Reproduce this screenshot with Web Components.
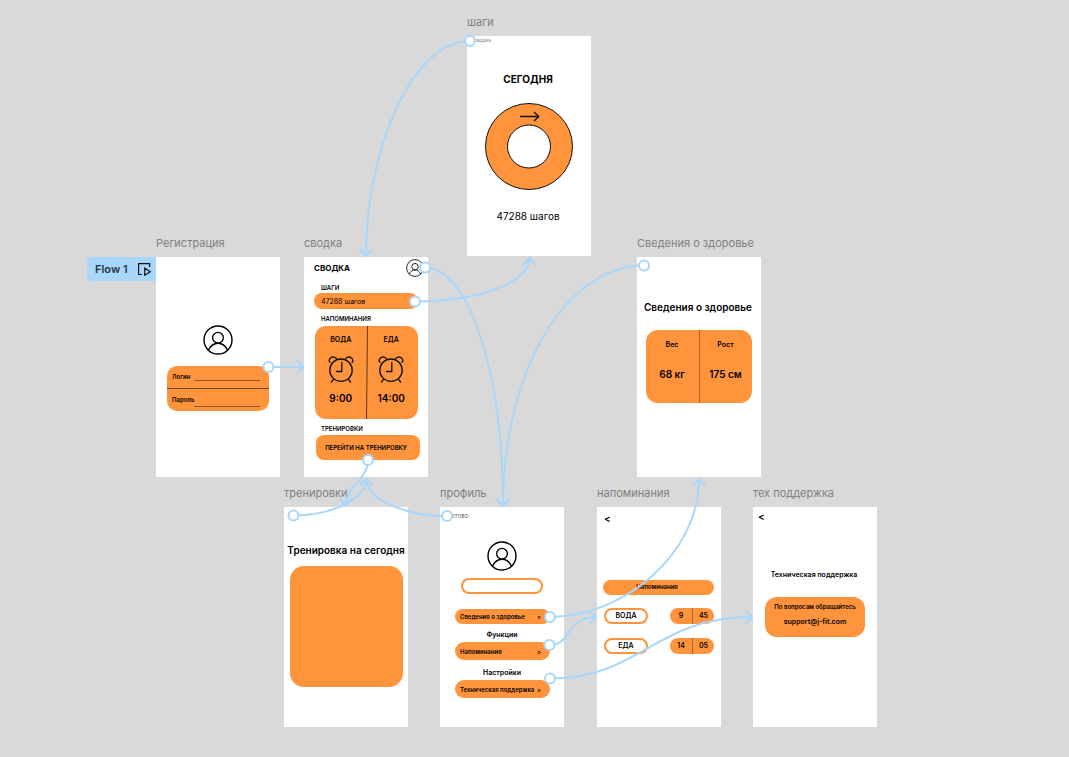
<!DOCTYPE html>
<html lang="ru">
<head>
<meta charset="utf-8">
<title>Прототип фитнес-приложения</title>
<style>
  html, body { margin: 0; min-height: 100%; background: #d9d9d9; }
  body { font-family: Inter, "Liberation Sans", sans-serif; color: #000; }
</style>
</head>
<body>
<flow-canvas>
  <flow-start style="left: 87px; top: 257px">Flow 1</flow-start>
  <design-frame label="шаги" style="left: 467px; top: 16px"><steps-screen></steps-screen></design-frame>
  <design-frame label="Регистрация" style="left: 156px; top: 237px"><signup-screen></signup-screen></design-frame>
  <design-frame label="сводка" style="left: 304px; top: 237px"><summary-screen></summary-screen></design-frame>
  <design-frame label="Сведения о здоровье" style="left: 637px; top: 237px"><health-screen></health-screen></design-frame>
  <design-frame label="тренировки" style="left: 284px; top: 487px"><training-screen></training-screen></design-frame>
  <design-frame label="профиль" style="left: 440px; top: 487px"><profile-screen></profile-screen></design-frame>
  <design-frame label="напоминания" style="left: 597px; top: 487px"><reminders-screen></reminders-screen></design-frame>
  <design-frame label="тех поддержка" style="left: 753px; top: 487px"><support-screen></support-screen></design-frame>
  <flow-wires slot="wires"></flow-wires>
</flow-canvas>

<script>
const shared = `
  *, *::before, *::after { box-sizing: border-box; }
  h2, h3, p { margin: 0; }
  a { color: inherit; text-decoration: none; }
  button { font: inherit; color: inherit; border: 0; padding: 0; margin: 0; background: none; }
  h2 { font-size: 10px; line-height: 12px; font-weight: 600; text-align: center; white-space: nowrap; }
  h3 { font-size: 6px; line-height: 8px; font-weight: 600; }
  .orange { background: #ff943c; }
  .tiny { font-size: 4px; line-height: 10px; color: #555; padding-left: 7px; }
`;
function define(name, css, html, setup) {
  const template = document.createElement('template');
  template.innerHTML = `<style>${shared}${css}</style>${html}`;
  customElements.define(name, class extends HTMLElement {
    constructor() {
      super();
      this.attachShadow({ mode: 'open' }).append(template.content.cloneNode(true));
    }
    connectedCallback() { if (setup) setup(this, this.shadowRoot); }
  });
}
const screenHost = ':host { display: flex; flex-direction: column; }';

define('flow-canvas', `
  :host { display: block; position: relative; min-height: 100vh; overflow: hidden; }
`, `<slot></slot><slot name="wires"></slot>`);

define('design-frame', `
  :host { display: block; position: absolute; width: 124px; }
  .label { font-size: 11px; line-height: 12px; margin-bottom: 8px; color: #808080; white-space: nowrap; }
  .screen { background: #fff; min-height: 220px; }
`, `<div class="label"></div><div class="screen"><slot></slot></div>`,
(el, root) => { root.querySelector('.label').textContent = el.getAttribute('label'); });

define('flow-start', `
  :host { display: block; position: absolute; }
  button { display: flex; align-items: center; justify-content: space-between; width: 69px; height: 24px; padding: 0 4px 0 8px;
    background: #a8d7fb; border-radius: 4px 0 0 4px; font-size: 11px; font-weight: 600; color: #253643; white-space: nowrap; }
  svg { display: block; }
`, `<button type="button"><slot></slot>
  <svg width="15" height="14" viewBox="0 0 15 14" fill="none" stroke="#111" stroke-width="1.2">
    <path d="M5 12.500H1.600V1.600h11v3.400M7.700 6.200v7l5.600-3.500z"/></svg></button>`);

define('user-avatar', `
  :host { display: block; width: 30px; height: 30px; }
  svg { display: block; width: 100%; height: 100%; }
`, `<svg viewBox="0 0 30 30" fill="none" stroke="#000" stroke-width="1.4">
  <circle cx="15" cy="15" r="14"/><circle cx="15" cy="12.800" r="5.400"/>
  <path d="M5.500 25.200C7.500 20.800 11 18.200 15 18.200s7.500 2.600 9.500 7"/></svg>`);

define('alarm-clock', `
  :host { display: block; width: 26px; height: 28px; }
  svg { display: block; }
`, `<svg width="26" height="28" viewBox="0 0 26 28" fill="none" stroke="#111" stroke-width="1.3" stroke-linecap="round">
  <circle cx="13" cy="14.200" r="11.200"/>
  <path d="M13.800 6.500v9H8.500M5.500 23.300l-2 2.700M20.500 23.300l2 2.700"/>
  <path d="M2 6.400C-.3 4.200 2.800.4 6 1.100c1.200.2 2 .7 2.300 1.500M24 6.400C26.300 4.200 23.200.4 20 1.100c-1.200.2-2 .7-2.300 1.500"/>
</svg>`);

define('steps-screen', `${screenHost}
  :host { text-align: center; }
  .tiny { text-align: left; }
  h2 { font-weight: 700; margin-top: 27px; margin-right: 2px; }
  svg { display: block; margin: 18px auto 20px; }
  p { font-size: 10px; line-height: 12px; margin-right: 2px; }
`, `<a href="#summary" class="tiny">СВОДКА</a>
  <h2>СЕГОДНЯ</h2>
  <svg width="88" height="87" viewBox="0 0 88 87" fill="none" stroke="#111">
    <ellipse cx="44" cy="43.500" rx="43.500" ry="43" fill="#ff943c"/>
    <circle cx="44" cy="43.500" r="21.500" fill="#fff"/>
    <path d="M35 13.500h18.500M49 9l4.800 4.500L49 18" stroke-width="1.300"/>
  </svg>
  <p>47288 шагов</p>`);

define('signup-screen', `${screenHost}
  user-avatar { margin: 68px auto 11px; }
  form { margin: 0 11px; border-radius: 10px; font-size: 6px; font-weight: 600; overflow: hidden; }
  .row { display: flex; height: 22px; padding: 0 9px 0 5px; }
  .row + .row { border-top: 1px solid #6b421f; height: 23px; }
  label { flex: 0 0 22px; line-height: 22px; white-space: nowrap; }
  input { flex: 1; min-width: 0; height: 15px; font: inherit; padding: 0; border: 0; border-bottom: 1px solid #8f5628; background: none; outline: 0; }
  .row + .row input { height: 18px; }
`, `<user-avatar></user-avatar>
  <form class="orange">
    <div class="row"><label for="login">Логин</label><input id="login" type="text"></div>
    <div class="row"><label for="password">Пароль</label><input id="password" type="password"></div>
  </form>`);

define('summary-screen', `${screenHost}
  header { display: flex; align-items: center; justify-content: space-between; height: 21px; padding: 0 4px 0 10px; }
  h2 { font-size: 8px; font-weight: 700; }
  user-avatar { width: 18px; height: 18px; }
  h3 { margin-left: 17px; }
  .steps { display: flex; justify-content: space-between; align-items: center; height: 16px; margin: 1px 10px 6px; padding: 0 8px 0 7px; border-radius: 8px; font-size: 7px; }
  .steps-title { margin-top: 6px; }
  .cards { position: relative; display: grid; grid-template-columns: 1fr 1fr; height: 93px; margin: 3px 10px 6px 11px; border-radius: 11px; }
  .split { position: absolute; inset: 0; width: 100%; height: 100%; }
  .card { display: flex; flex-direction: column; align-items: center; padding-top: 10px; }
  .card:last-child { padding-right: 2px; }
  .name { font-size: 7px; line-height: 8px; font-weight: 600; }
  alarm-clock { margin: 12px 0 8px; }
  .time { font-size: 10px; line-height: 12px; font-weight: 600; }
  .go { height: 25px; margin: 2px 8px 0 12px; padding-right: 4px; border-radius: 8px; font-size: 6px; font-weight: 600; white-space: nowrap; }
`, `<header><h2>СВОДКА</h2><user-avatar></user-avatar></header>
  <h3 class="steps-title">ШАГИ</h3>
  <a href="#steps" class="steps orange"><span>47288 шагов</span></a>
  <h3>НАПОМИНАНИЯ</h3>
  <div class="cards orange">
    <svg class="split" viewBox="0 0 103 93" preserveAspectRatio="none"><path d="M52.500 0L51.500 93" stroke="#5a3a1e" stroke-width="1"/></svg>
    <div class="card"><span class="name">ВОДА</span><alarm-clock></alarm-clock><span class="time">9:00</span></div>
    <div class="card"><span class="name">ЕДА</span><alarm-clock></alarm-clock><span class="time">14:00</span></div>
  </div>
  <h3>ТРЕНИРОВКИ</h3>
  <button type="button" class="go orange">ПЕРЕЙТИ НА ТРЕНИРОВКУ</button>`);

define('health-screen', `${screenHost}
  .tiny { padding-left: 12px; line-height: 20px; height: 20px; }
  h2 { margin: 24px 2px 17px 0; }
  .box { display: grid; grid-template-columns: 1fr 1fr; height: 73px; margin: 0 9px; border-radius: 12px; text-align: center; }
  .cell { padding: 11px 1px 0 0; }
  .cell + .cell { border-left: 1px solid #a5642d; }
  .name { font-size: 7px; line-height: 8px; font-weight: 600; margin-bottom: 19px; }
  .value { font-size: 10px; line-height: 12px; font-weight: 600; }
`, `<a href="#profile" class="tiny">,</a>
  <h2>Сведения о здоровье</h2>
  <div class="box orange">
    <div class="cell"><p class="name">Вес</p><p class="value">68 кг</p></div>
    <div class="cell"><p class="name">Рост</p><p class="value">175 см</p></div>
  </div>`);

define('training-screen', `${screenHost}
  h2 { margin: 37px 0 10px; }
  .box { height: 121px; margin: 0 5px 0 6px; border-radius: 14px; }
`, `<h2>Тренировка на сегодня</h2><div class="box orange"></div>`);

define('profile-screen', `${screenHost}
  .tiny { font-size: 5px; line-height: 18px; padding-left: 8px; }
  user-avatar { margin: 16px auto 7px; }
  input { display: block; width: auto; height: 16px; margin: 0 21px 15px; padding: 0 8px; border: 2px solid #ff943c; border-radius: 8px; background: #fff; font: inherit; font-size: 7px; outline: 0; }
  .item { display: flex; align-items: center; justify-content: space-between; height: 15px; margin: 0 14px 0 15px; padding: 0 9px 0 5px; border-radius: 9px; font-size: 6px; font-weight: 600; white-space: nowrap; }
  h3 { font-size: 7px; line-height: 9px; text-align: center; margin: 6px 0 3px; }
  .tall { height: 18px; }
  .tall + h3 { margin-top: 8px; }
`, `<a href="#summary" class="tiny">ГОТОВО</a>
  <user-avatar></user-avatar>
  <input type="text" aria-label="Имя">
  <a href="#health" class="item orange"><span>Сведения о здоровье</span><span>&gt;</span></a>
  <h3>Функции</h3>
  <a href="#reminders" class="item tall orange"><span>Напоминания</span><span>&gt;</span></a>
  <h3>Настройки</h3>
  <a href="#support" class="item tall orange"><span>Техническая поддержка</span><span>&gt;</span></a>`);

define('reminders-screen', `${screenHost}
  .back { font-size: 10px; line-height: 12px; font-weight: 600; padding-left: 7px; margin: 5px 0 56px; }
  .title { height: 15px; line-height: 14px; margin: 0 7px 13px 6px; padding-right: 3px; border-radius: 8px; text-align: center; }
  .row { display: flex; justify-content: space-between; height: 16px; margin: 0 7px 14px; font-size: 7px; line-height: 16px; font-weight: 600; text-align: center; }
  .name { width: 44px; line-height: 12px; border: 2px solid #ff943c; border-radius: 8px; }
  .time { display: grid; grid-template-columns: 1fr 1fr; width: 44px; border-radius: 8px; }
  .time span + span { border-left: 1px solid #a5642d; }
`, `<a href="#profile" class="back">&lt;</a>
  <h3 class="title orange">Напоминания</h3>
  <div class="row"><span class="name">ВОДА</span><div class="time orange"><span>9</span><span>45</span></div></div>
  <div class="row"><span class="name">ЕДА</span><div class="time orange"><span>14</span><span>05</span></div></div>`);

define('support-screen', `${screenHost}
  .back { font-size: 10px; line-height: 12px; font-weight: 600; padding-left: 5px; margin-top: 3px; }
  h2 { font-size: 7px; margin: 47px 2px 16px 0; }
  .box { display: flex; flex-direction: column; align-items: center; height: 40px; margin: 0 12px; padding-top: 6px; border-radius: 12px; font-size: 6px; line-height: 8px; font-weight: 600; white-space: nowrap; }
  .mail { font-size: 7px; margin-top: 7px; }
`, `<a href="#profile" class="back">&lt;</a>
  <h2>Техническая поддержка</h2>
  <div class="box orange"><p>По вопросам обращайтесь</p><a class="mail" href="mailto:support@j-fit.com">support@j-fit.com</a></div>`);

define('flow-wires', `
  :host { display: block; position: absolute; inset: 0; pointer-events: none; }
  svg { display: block; width: 100%; height: 100%; overflow: visible; }
`, `<svg fill="none" stroke="#a8d7fb" stroke-width="2" stroke-linecap="round" stroke-linejoin="round">
  <path d="M470 41C412 41 366 150 366 256M360 249.500l6 6.500 6-6.500"/>
  <path d="M415 301.500C475 301.500 529 284 529 258M523 264.500l6-6.500 6 6.500"/>
  <path d="M425 267.500C468 267.500 503 370 503 506M644 265.500C566 265.500 503 370 503 506M496.500 499.500l6.500 6.500 6.500-6.500"/>
  <path d="M268.500 367H303M297 361l6.500 6-6.500 6"/>
  <path d="M368 460C368 480 346 485 346 505M340 499l6 6 6-6"/>
  <path d="M293.500 515.500C333 515.500 366 498 366 479M447 516C402 516 366 498 366 479M360 485l6-6 6 6"/>
  <path d="M550 617C622 617 699 555 699 479M693 485l6-6 6 6"/>
  <path d="M549.500 645C572 645 566 617 596 617M590 611l6 6-6 6"/>
  <path d="M550 678.500C640 678.500 655 617 752 617M746 611l6 6-6 6"/>
  <g fill="#fff">
    <circle cx="470" cy="41" r="5"/><circle cx="415" cy="301.500" r="5"/>
    <circle cx="425" cy="267.500" r="5"/><circle cx="644" cy="265.500" r="5"/>
    <circle cx="268.500" cy="367" r="5"/><circle cx="368" cy="460" r="5"/>
    <circle cx="293.500" cy="515.500" r="5"/><circle cx="447" cy="516" r="5"/>
    <circle cx="550" cy="617" r="5"/><circle cx="549.500" cy="645" r="5"/><circle cx="550" cy="678.500" r="5"/>
  </g>
</svg>`);
</script>
</body>
</html>
